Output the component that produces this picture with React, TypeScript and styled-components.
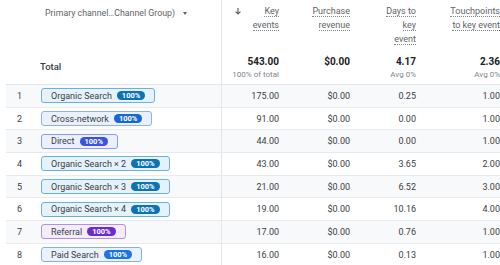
import React from 'react';
import styled, { createGlobalStyle } from 'styled-components';

type ChipKind = 'organic' | 'cross' | 'direct' | 'referral' | 'paid';

interface IChipColors {
    bg: string;
    border: string;
    badge: string;
}

const chipColors: Record<ChipKind, IChipColors> = {
    organic: { bg: '#e5f2fb', border: '#6ab2de', badge: '#0b72b5' },
    cross: { bg: '#eaf1fd', border: '#8db1ef', badge: '#1967d2' },
    direct: { bg: '#eceffd', border: '#8b9bef', badge: '#3a52e0' },
    referral: { bg: '#f4ecfd', border: '#ae92e6', badge: '#6a2ad4' },
    paid: { bg: '#eaf2fe', border: '#85aff1', badge: '#1a73e8' }
};

interface IRowData {
    label: string;
    kind: ChipKind;
    keyEvents: string;
    revenue: string;
    days: string;
    touchpoints: string;
}

const rows: IRowData[] = [
    { label: 'Organic Search', kind: 'organic', keyEvents: '175.00', revenue: '$0.00', days: '0.25', touchpoints: '1.00' },
    { label: 'Cross-network', kind: 'cross', keyEvents: '91.00', revenue: '$0.00', days: '0.00', touchpoints: '1.00' },
    { label: 'Direct', kind: 'direct', keyEvents: '44.00', revenue: '$0.00', days: '0.00', touchpoints: '1.00' },
    { label: 'Organic Search × 2', kind: 'organic', keyEvents: '43.00', revenue: '$0.00', days: '3.65', touchpoints: '2.00' },
    { label: 'Organic Search × 3', kind: 'organic', keyEvents: '21.00', revenue: '$0.00', days: '6.52', touchpoints: '3.00' },
    { label: 'Organic Search × 4', kind: 'organic', keyEvents: '19.00', revenue: '$0.00', days: '10.16', touchpoints: '4.00' },
    { label: 'Referral', kind: 'referral', keyEvents: '17.00', revenue: '$0.00', days: '0.76', touchpoints: '1.00' },
    { label: 'Paid Search', kind: 'paid', keyEvents: '16.00', revenue: '$0.00', days: '0.13', touchpoints: '1.00' }
];

const GlobalStyle = createGlobalStyle`
    html, body {
        margin: 0;
        padding: 0;
        background: #fff;
        overflow: hidden;
    }
    body {
        font-family: Roboto, "Liberation Sans", Arial, sans-serif;
        color: #3c4043;
        width: 500px;
        height: 265px;
    }
`;

const COLS = '216px 65px 71px 66px 84px';

const Table = styled.div`
    margin-left: 6px;
    width: 510px;
`;

const HeaderRow = styled.div`
    display: grid;
    grid-template-columns: ${COLS};
    height: 84px;
    border-bottom: 1px solid #e3e5e8;
`;

const DimHeader = styled.div`
    display: flex;
    flex-direction: column;
    justify-content: space-between;
    border-right: 1px solid #e3e5e8;
    padding: 8px 0 12px 34px;
`;

const DimTitle = styled.div`
    display: flex;
    align-items: center;
    gap: 8px;
    padding-left: 5px;
    font-size: 8.8px;
    color: #5f6368;
`;

const Caret = styled.span`
    width: 0;
    height: 0;
    border-left: 2.5px solid transparent;
    border-right: 2.5px solid transparent;
    border-top: 3px solid #5f6368;
`;

const TotalLabel = styled.div`
    font-size: 9.5px;
    font-weight: 500;
    color: #3c4043;
`;

const MetricHeader = styled.div`
    position: relative;
    display: flex;
    flex-direction: column;
    align-items: flex-end;
    justify-content: space-between;
    padding: 4px 8px 4px 0;
`;

const MetricTitle = styled.div`
    text-align: right;
    font-size: 9px;
    line-height: 14px;
    color: #5f6368;
`;

const Dotted = styled.span`
    border-bottom: 1px dotted #80868b;
`;

const SortArrow = styled.svg`
    position: absolute;
    left: 13px;
    top: 8px;
`;

const TotalValue = styled.div`
    text-align: right;
    font-size: 10px;
    font-weight: 700;
    color: #202124;
    line-height: 13px;
`;

const TotalSub = styled.div`
    text-align: right;
    font-size: 8px;
    color: #80868b;
    margin-top: 1px;
    line-height: 11px;
    min-height: 11px;
`;

const BodyRow = styled.div<{ $odd: boolean }>`
    display: grid;
    grid-template-columns: ${COLS};
    height: 22.7px;
    box-sizing: border-box;
    border-bottom: 1px solid #e8eaed;
    background: ${({ $odd }) => ($odd ? '#f8f9fa' : '#fff')};
    font-size: 9px;
    color: #3c4043;
`;

const DimCell = styled.div`
    display: flex;
    align-items: center;
    border-right: 1px solid #e3e5e8;
`;

const Index = styled.span`
    width: 35px;
    padding-left: 11px;
    box-sizing: border-box;
`;

const Chip = styled.span<{ $kind: ChipKind }>`
    display: inline-flex;
    align-items: center;
    gap: 5px;
    height: 15px;
    box-sizing: border-box;
    padding: 0 9px;
    border-radius: 3px;
    border: 1.5px solid ${({ $kind }) => chipColors[$kind].border};
    background: ${({ $kind }) => chipColors[$kind].bg};
    color: #3c4043;
    font-size: 9px;
`;

const Badge = styled.span<{ $kind: ChipKind }>`
    display: inline-flex;
    align-items: center;
    height: 9px;
    padding: 0 5px;
    border-radius: 5px;
    background: ${({ $kind }) => chipColors[$kind].badge};
    color: #fff;
    font-size: 7.5px;
    font-weight: 700;
`;

const NumCell = styled.div`
    display: flex;
    align-items: center;
    justify-content: flex-end;
    padding-right: 8px;
`;

const Metric: React.FC<{ lines: string[]; total: string; sub?: string; sorted?: boolean }> = ({
    lines,
    total,
    sub,
    sorted
}) => (
    <MetricHeader>
        {sorted && (
            <SortArrow width="6" height="7" viewBox="0 0 6 7">
                <path d="M3 0 V6 M0.6 3.6 L3 6 L5.4 3.6" stroke="#5f6368" strokeWidth="1.2" fill="none" />
            </SortArrow>
        )}
        <MetricTitle>
            {lines.map((l, i) => (
                <div key={i}>
                    <Dotted>{l}</Dotted>
                </div>
            ))}
        </MetricTitle>
        <div>
            <TotalValue>{total}</TotalValue>
            <TotalSub>{sub}</TotalSub>
        </div>
    </MetricHeader>
);

const App: React.FC = () => {
    return (
        <>
            <GlobalStyle />
            <Table>
                <HeaderRow>
                    <DimHeader>
                        <DimTitle>
                            Primary channel…Channel Group)
                            <Caret />
                        </DimTitle>
                        <TotalLabel>Total</TotalLabel>
                    </DimHeader>
                    <Metric lines={['Key', 'events']} total="543.00" sub="100% of total" sorted />
                    <Metric lines={['Purchase', 'revenue']} total="$0.00" />
                    <Metric lines={['Days to', 'key', 'event']} total="4.17" sub="Avg 0%" />
                    <Metric lines={['Touchpoints', 'to key event']} total="2.36" sub="Avg 0%" />
                </HeaderRow>
                {rows.map((r, i) => (
                    <BodyRow key={i} $odd={i % 2 === 0}>
                        <DimCell>
                            <Index>{i + 1}</Index>
                            <Chip $kind={r.kind}>
                                {r.label}
                                <Badge $kind={r.kind}>100%</Badge>
                            </Chip>
                        </DimCell>
                        <NumCell>{r.keyEvents}</NumCell>
                        <NumCell>{r.revenue}</NumCell>
                        <NumCell>{r.days}</NumCell>
                        <NumCell>{r.touchpoints}</NumCell>
                    </BodyRow>
                ))}
            </Table>
        </>
    );
};

export default App;
